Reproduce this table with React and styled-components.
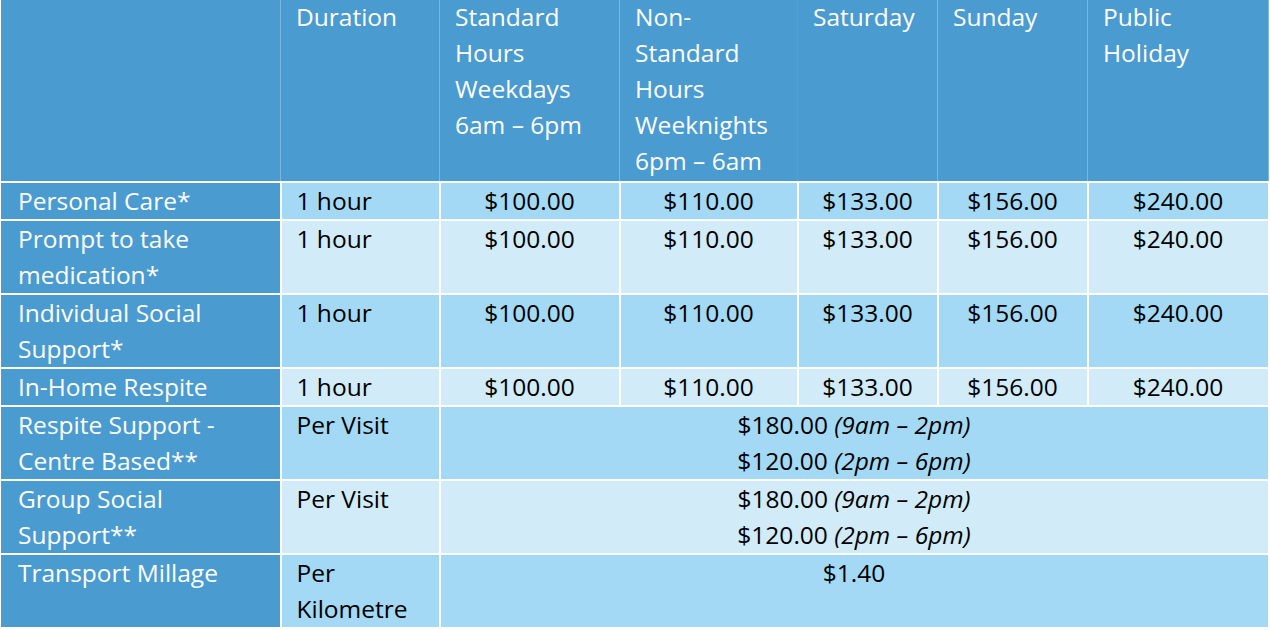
import React from "react";
import styled, { createGlobalStyle } from "styled-components";

const Global = createGlobalStyle`
  html, body { margin: 0; padding: 0; background: #ffffff; }
  body { font-family: "Open Sans", "Noto Sans", sans-serif; }
`;

const Table = styled.table`
  width: 1268px;
  table-layout: fixed;
  border-collapse: collapse;
  font-size: 24.5px;
  line-height: 36px;
`;

const HeadCell = styled.th`
  background: #4a9bd0;
  color: #ffffff;
  font-weight: 400;
  text-align: left;
  vertical-align: top;
  padding: 0 0 0 15px;
  height: 181px;
  white-space: nowrap;
  border-right: 1px solid ${(p) => (p.$faint ? "rgba(255,255,255,0.06)" : "rgba(255,255,255,0.28)")};
  border-bottom: 2px solid #ffffff;
  &:first-child { border-left: 1px solid rgba(255,255,255,0.35); }
`;

const HeadText = styled.div`
  margin-top: -1px;
`;

const Label = styled.th`
  background: #4a9bd0;
  color: #ffffff;
  font-weight: 400;
  text-align: left;
  vertical-align: top;
  padding: 0 0 0 17px;
  white-space: nowrap;
  border: 2px solid #ffffff;
  border-left: 1px solid rgba(255,255,255,0.35);
`;

const Cell = styled.td`
  background: ${(p) => (p.$alt ? "#d1ebf8" : "#a4d9f5")};
  color: #000000;
  text-align: ${(p) => (p.$center ? "center" : "left")};
  vertical-align: top;
  padding: 0 0 0 ${(p) => (p.$center ? "0" : "15px")};
  white-space: nowrap;
  border: 2px solid #ffffff;
`;

const Time = styled.em`
  font-style: italic;
`;

const cols = [280, 159, 180, 178, 140, 150, 181];

const standardRows = [
  { label: ["Personal Care*"] },
  { label: ["Prompt to take", "medication*"] },
  { label: ["Individual Social", "Support*"] },
  { label: ["In-Home Respite"] },
];

const prices = ["$100.00", "$110.00", "$133.00", "$156.00", "$240.00"];

const Lines = ({ lines }) =>
  lines.map((l, i) => (
    <React.Fragment key={i}>
      {i > 0 && <br />}
      {l}
    </React.Fragment>
  ));

const Visit = () => (
  <>
    $180.00 <Time>(9am – 2pm)</Time>
    <br />
    $120.00 <Time>(2pm – 6pm)</Time>
  </>
);

const Head = ({ lines, faint }) => (
  <HeadCell $faint={faint}>
    <HeadText>
      <Lines lines={lines} />
    </HeadText>
  </HeadCell>
);

export default function App() {
  return (
    <>
      <Global />
      <Table>
        <colgroup>
          {cols.map((w, i) => (
            <col key={i} style={{ width: w }} />
          ))}
        </colgroup>
        <thead>
          <tr>
            <Head lines={[]} />
            <Head lines={["Duration"]} />
            <Head lines={["Standard", "Hours", "Weekdays", "6am – 6pm"]} />
            <Head faint lines={["Non-", "Standard", "Hours", "Weeknights", "6pm – 6am"]} />
            <Head lines={["Saturday"]} />
            <Head lines={["Sunday"]} />
            <Head lines={["Public", "Holiday"]} />
          </tr>
        </thead>
        <tbody>
          {standardRows.map((r, i) => (
            <tr key={i}>
              <Label>
                <Lines lines={r.label} />
              </Label>
              <Cell $alt={i % 2 === 1}>1 hour</Cell>
              {prices.map((p) => (
                <Cell key={p} $alt={i % 2 === 1} $center>
                  {p}
                </Cell>
              ))}
            </tr>
          ))}
          <tr>
            <Label>
              <Lines lines={["Respite Support -", "Centre Based**"]} />
            </Label>
            <Cell>Per Visit</Cell>
            <Cell colSpan={5} $center>
              <Visit />
            </Cell>
          </tr>
          <tr>
            <Label>
              <Lines lines={["Group Social", "Support**"]} />
            </Label>
            <Cell $alt>Per Visit</Cell>
            <Cell $alt colSpan={5} $center>
              <Visit />
            </Cell>
          </tr>
          <tr>
            <Label>Transport Millage</Label>
            <Cell>
              <Lines lines={["Per", "Kilometre"]} />
            </Cell>
            <Cell colSpan={5} $center>
              $1.40
            </Cell>
          </tr>
        </tbody>
      </Table>
    </>
  );
}
